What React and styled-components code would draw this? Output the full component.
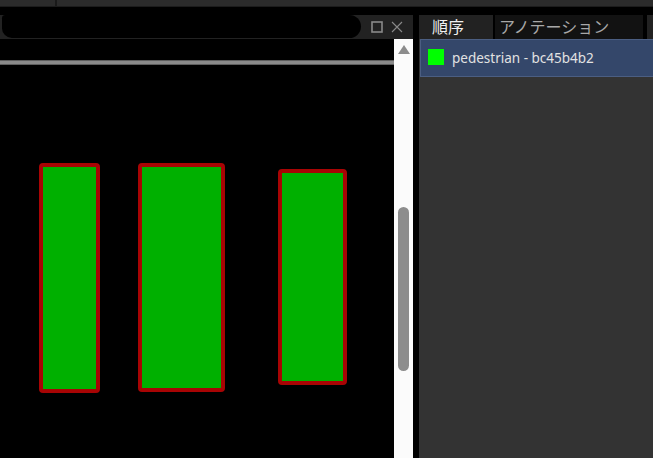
import React from "react";
import styled, { createGlobalStyle } from "styled-components";

const Global = createGlobalStyle`
  html, body { margin: 0; padding: 0; background: #000; }
  body { width: 653px; height: 458px; overflow: hidden; font-family: "Noto Sans", "Noto Sans CJK JP", sans-serif; }
  #root { width: 653px; height: 458px; }
`;

const Page = styled.div`
  width: 653px;
  height: 458px;
  display: flex;
  flex-direction: column;
  background: #000;
`;

const TopBar = styled.div`
  height: 6px;
  background: #2b2b2b;
  border-bottom: 1px solid #1c1c1c;
  display: flex;
`;

const TopSeg = styled.div`
  width: ${(p) => p.$w || "auto"};
  flex: ${(p) => (p.$w ? "none" : 1)};
  border-right: ${(p) => (p.$sep ? "2px solid #1a1a1a" : "none")};
`;

const Spacer = styled.div`
  height: 8px;
  background: #000;
`;

const Main = styled.div`
  flex: 1;
  display: flex;
  gap: 6px;
  min-height: 0;
`;

const LeftPanel = styled.div`
  width: 413px;
  flex: none;
  display: flex;
  flex-direction: column;
`;

const TitleBar = styled.div`
  height: 24px;
  background: #222;
  display: flex;
  align-items: center;
  padding: 0 10px 0 2px;
  gap: 8px;
`;

const Redaction = styled.div`
  flex: 1;
  height: 23px;
  align-self: flex-start;
  background: #000;
  border-radius: 4px 14px 14px 12px;
  margin-right: 2px;
`;

const IconBtn = styled.svg`
  width: 12px;
  height: 12px;
  flex: none;
`;

const Body = styled.div`
  flex: 1;
  display: flex;
  min-height: 0;
`;

const Canvas = styled.div`
  position: relative;
  flex: 1;
  background: #000;
  overflow: hidden;
`;

const HLine = styled.div`
  margin-top: 21px;
  height: 3px;
  background: #8a8a8a;
  border-top: 1px solid #5e5e5e;
  border-bottom: 1px solid #5e5e5e;
`;

const BBox = styled.div`
  position: absolute;
  box-sizing: border-box;
  background: #00b000;
  border: 4px solid #a80404;
  border-radius: 4px;
`;

const ScrollBar = styled.div`
  width: 19px;
  flex: none;
  background: #fbfbfb;
  display: flex;
  flex-direction: column;
  align-items: center;
`;

const UpArrow = styled.div`
  margin-top: 6px;
  width: 0;
  height: 0;
  border-left: 6px solid transparent;
  border-right: 6px solid transparent;
  border-bottom: 9px solid #8c8c8c;
`;

const Thumb = styled.div`
  margin-top: 153px;
  width: 11px;
  height: 164px;
  background: #8d8d8d;
  border-radius: 6px;
`;

const RightPanel = styled.div`
  flex: 1;
  min-width: 0;
  display: flex;
  flex-direction: column;
  background: #333;
  overflow: hidden;
`;

const Tabs = styled.div`
  height: 24px;
  display: flex;
  gap: 2px;
  background: #000;
`;

const Tab = styled.div`
  width: ${(p) => p.$w};
  flex: ${(p) => (p.$w ? "none" : 1)};
  margin-left: ${(p) => p.$ml || "0"};
  background: ${(p) => (p.$active ? "#222" : "#121212")};
  color: ${(p) => (p.$active ? "#f0f0f0" : "#a8a8a8")};
  font-size: 16px;
  line-height: 24px;
  padding-left: ${(p) => p.$pl || "12px"};
  box-sizing: border-box;
  white-space: nowrap;
  overflow: hidden;
`;

const Row = styled.div`
  height: 38px;
  margin-left: 1px;
  box-sizing: border-box;
  background: #34476a;
  border: 1px solid #4b5e82;
  border-right: none;
  display: flex;
  align-items: center;
  padding-left: 7px;
  gap: 8px;
`;

const Swatch = styled.div`
  width: 16px;
  height: 16px;
  background: #00ff00;
  margin-top: -2px;
`;

const Label = styled.span`
  color: #e2e2e2;
  font-size: 13.5px;
  font-family: "Noto Sans", "Noto Sans CJK JP", sans-serif;
  margin-top: -1px;
`;

const boxes = [
  { x: 39, y: 124, w: 61, h: 230 },
  { x: 138, y: 124, w: 87, h: 229 },
  { x: 278, y: 130, w: 69, h: 216 },
];

export default function App() {
  return (
    <Page>
      <Global />
      <TopBar>
        <TopSeg $w="55px" $sep />
        <TopSeg />
      </TopBar>
      <Spacer />
      <Main>
        <LeftPanel>
          <TitleBar>
            <Redaction />
            <IconBtn viewBox="0 0 12 12">
              <rect x="1" y="1" width="10" height="10" fill="none" stroke="#8a8a8a" strokeWidth="1.6" />
            </IconBtn>
            <IconBtn viewBox="0 0 12 12">
              <path d="M1 1 L11 11 M11 1 L1 11" stroke="#8a8a8a" strokeWidth="1.1" />
            </IconBtn>
          </TitleBar>
          <Body>
            <Canvas>
              <HLine />
              {boxes.map((b, i) => (
                <BBox key={i} style={{ left: b.x, top: b.y, width: b.w, height: b.h }} />
              ))}
            </Canvas>
            <ScrollBar>
              <UpArrow />
              <Thumb />
            </ScrollBar>
          </Body>
        </LeftPanel>
        <RightPanel>
          <Tabs>
            <Tab $active $w="74px" $pl="13px">順序</Tab>
            <Tab $w="148px" $pl="4px">アノテーション</Tab>
            <Tab $ml="2px" $active />
          </Tabs>
          <Row>
            <Swatch />
            <Label>pedestrian - bc45b4b2</Label>
          </Row>
        </RightPanel>
      </Main>
    </Page>
  );
}
